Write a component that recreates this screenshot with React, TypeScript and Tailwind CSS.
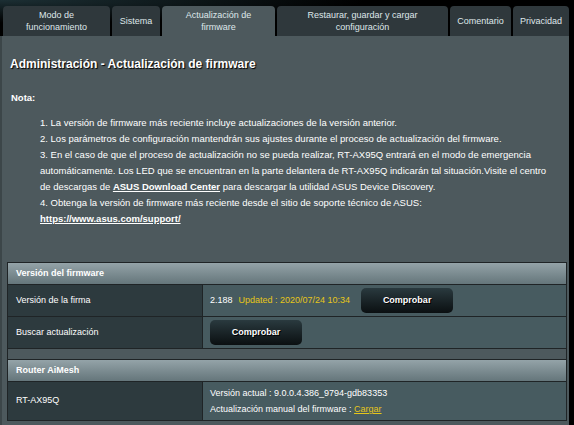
import * as React from "react";

const tabs = [
  { label: ["Modo de", "funcionamiento"], w: "w-[107px]", active: false },
  { label: ["Sistema"], w: "w-[48px]", active: false },
  { label: ["Actualización de", "firmware"], w: "w-[113px]", active: true },
  { label: ["Restaurar, guardar y cargar", "configuración"], w: "w-[171px]", active: false },
  { label: ["Comentario"], w: "w-[61px]", active: false },
  { label: ["Privacidad"], w: "w-[56px]", active: false },
];

function CheckButton() {
  return (
    <button className="w-[92px] h-[25px] rounded-[5px] bg-gradient-to-b from-[#2a3a3f] to-[#0b1012] text-white font-bold text-[9px] [text-shadow:1px_1px_0_#000]">
      Comprobar
    </button>
  );
}

export default function App() {
  return (
    <div className="w-[574px] h-[425px] overflow-hidden bg-black flex flex-col font-['Liberation_Sans',Arial,sans-serif] text-[9px] text-white">
      {/* tab strip */}
      <div className="h-[36px] shrink-0 flex items-end gap-[2px] pl-[3px] bg-[radial-gradient(ellipse_at_0%_0%,#1c2f34_0%,#000_45%)]">
        {tabs.map((t, i) => (
          <div
            key={i}
            className={`${t.w} h-[30px] rounded-t-[4px] flex flex-col items-center justify-center leading-[12px] text-[#dfe7ea] text-center ${
              t.active ? "bg-[#4d595d]" : "bg-[#2f383c]"
            }`}
          >
            {t.label.map((l) => (
              <span key={l}>{l}</span>
            ))}
          </div>
        ))}
      </div>

      <div className="w-[569px] flex-1 bg-[#4d595d] border-l-2 border-[#3c4649]">
        <h1 className="pt-[20px] pl-[8px] leading-[16px] text-[12px] font-bold [text-shadow:1px_1px_1px_#000]">
          Administración - Actualización de firmware
        </h1>

        <p className="mt-[18px] pl-[9px] leading-[16px] text-[9.5px] font-bold">Nota:</p>

        <ol className="mt-[9px] pl-[38px] pr-[14px] leading-[16px] text-[9.5px] list-decimal list-inside">
          <li>La versión de firmware más reciente incluye actualizaciones de la versión anterior.</li>
          <li>Los parámetros de configuración mantendrán sus ajustes durante el proceso de actualización del firmware.</li>
          <li>
            En el caso de que el proceso de actualización no se pueda realizar, RT-AX95Q entrará en el modo de emergencia
            automáticamente. Los LED que se encuentran en la parte delantera de RT-AX95Q indicarán tal situación.Visite el centro
            de descargas de <span className="font-bold underline">ASUS Download Center</span> para descargar la utilidad ASUS Device Discovery.
          </li>
          <li>
            Obtenga la versión de firmware más reciente desde el sitio de soporte técnico de ASUS:
            <br />
            <span className="font-bold underline">https://www.asus.com/support/</span>
          </li>
        </ol>

        <div className="mt-[35px] ml-[5px] w-[560px] border border-[#1f2426]">
          <div className="h-[21px] pl-[8px] flex items-center font-bold bg-gradient-to-b from-[#94a3a8] to-[#65767b]">
            Versión del firmware
          </div>
          <div className="flex h-[32px] border-t border-[#1f2426]">
            <div className="w-[195px] pl-[8px] flex items-center bg-[#2d3a3e] border-r border-[#1f2426]">
              Versión de la firma
            </div>
            <div className="flex-1 pl-[7px] flex items-center bg-[#475b60]">
              <span>2.188</span>
              <span className="ml-[6px] text-[#e6c619]">Updated : 2020/07/24 10:34</span>
              <span className="ml-[11px]">
                <CheckButton />
              </span>
            </div>
          </div>
          <div className="flex h-[32px] border-t border-[#1f2426]">
            <div className="w-[195px] pl-[8px] flex items-center bg-[#2d3a3e] border-r border-[#1f2426]">
              Buscar actualización
            </div>
            <div className="flex-1 pl-[7px] flex items-center bg-[#475b60]">
              <CheckButton />
            </div>
          </div>
          <div className="h-[11px] border-t border-[#1f2426] bg-[#4d595d]" />
          <div className="h-[22px] pl-[8px] flex items-center font-bold border-t border-[#1f2426] bg-gradient-to-b from-[#94a3a8] to-[#65767b]">
            Router AiMesh
          </div>
          <div className="flex h-[39px] border-t border-[#1f2426]">
            <div className="w-[195px] pl-[8px] flex items-center bg-[#2d3a3e] border-r border-[#1f2426]">
              RT-AX95Q
            </div>
            <div className="flex-1 pl-[7px] flex flex-col justify-center leading-[16px] bg-[#475b60]">
              <span>Versión actual : 9.0.0.4.386_9794-gdb83353</span>
              <span>
                Actualización manual del firmware : <span className="text-[#e6c619] underline">Cargar</span>
              </span>
            </div>
          </div>
        </div>
      </div>
    </div>
  );
}
